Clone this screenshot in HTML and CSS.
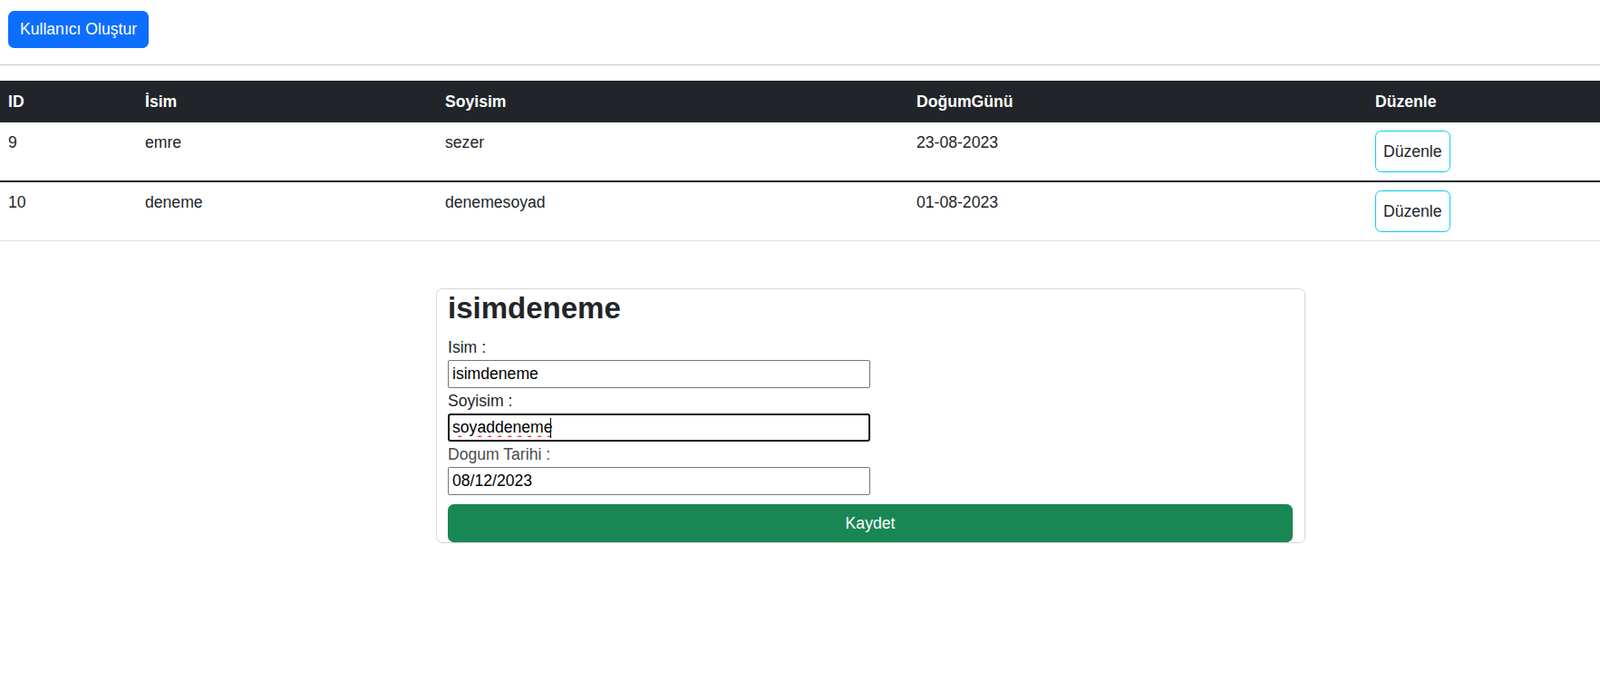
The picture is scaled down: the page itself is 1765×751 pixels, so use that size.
FILE: index.html
```html
<!DOCTYPE html>
<html lang="tr">
<head>
<meta charset="utf-8">
<title>Kullanıcılar</title>
<link rel="stylesheet" href="styles.css">
</head>
<body>
<div class="toolbar">
  <button class="btn btn-primary">Kullanıcı Oluştur</button>
</div>
<hr class="divider">
<table class="users">
  <colgroup>
    <col class="c-id"><col class="c-name"><col class="c-surname"><col class="c-birth"><col class="c-edit">
  </colgroup>
  <thead>
    <tr><th>ID</th><th>İsim</th><th>Soyisim</th><th>DoğumGünü</th><th>Düzenle</th></tr>
  </thead>
  <tbody>
    <tr class="row-first"><td>9</td><td>emre</td><td>sezer</td><td>23-08-2023</td><td><button class="btn-edit">Düzenle</button></td></tr>
    <tr class="row-last"><td>10</td><td>deneme</td><td>denemesoyad</td><td>01-08-2023</td><td><button class="btn-edit">Düzenle</button></td></tr>
  </tbody>
</table>

<div class="card">
  <h2 class="card-title">isimdeneme</h2>
  <label class="field-label" for="isim">Isim :</label>
  <input class="field" id="isim" type="text" value="isimdeneme">
  <label class="field-label" for="soyisim">Soyisim :</label>
  <div class="field-wrap">
    <input class="field field-focus" id="soyisim" type="text" value="soyaddeneme" spellcheck="false">
    <span class="caret"></span>
  </div>
  <label class="field-label label-muted" for="dogum">Dogum Tarihi :</label>
  <input class="field" id="dogum" type="text" value="08/12/2023">
  <button class="btn btn-success">Kaydet</button>
</div>
</body>
</html>
```
FILE: styles.css
```css
* { box-sizing: border-box; }
html, body { margin: 0; padding: 0; background: #fff; }
body {
  font-family: "Liberation Sans", Arial, sans-serif;
  font-size: 17.6px;
  line-height: 26.4px;
  color: #212529;
}
.toolbar { padding: 12px 0 0 9px; }
.btn {
  font-family: inherit;
  font-size: 17.6px;
  line-height: 26.4px;
  border: none;
  border-radius: 6.6px;
  color: #fff;
  cursor: pointer;
}
.btn-primary {
  background: #0d6efd;
  height: 41px;
  padding: 0 13px;
  display: block;
}
.divider {
  border: 0;
  border-top: 1px solid #c8c9ca;
  margin: 18px 0 17px;
  height: 0;
}
.users {
  width: 100%;
  border-collapse: collapse;
  table-layout: fixed;
}
.c-id { width: 151px; }
.c-name { width: 331px; }
.c-surname { width: 520px; }
.c-birth { width: 506px; }
.c-edit { width: 257px; }
.users th {
  background: #212529;
  color: #fff;
  text-align: left;
  font-weight: 700;
  padding: 10px 9px;
  line-height: 26px;
}
.users td {
  padding: 9px 9px;
  vertical-align: top;
  text-align: left;
}
.row-first td { border-bottom: 2px solid #212529; }
.row-last td { border-bottom: 1px solid #dee2e6; }
.btn-edit {
  font-family: inherit;
  font-size: 17.6px;
  line-height: 26.4px;
  background: #fff;
  color: #212529;
  border: 1px solid #0dcaf0;
  border-radius: 6.6px;
  padding: 8.8px 8px;
  height: 46px;
  display: block;
}
.card {
  margin: 52px 0 0 481px;
  width: 959px;
  border: 1px solid #d6d6d7;
  border-radius: 6.6px;
  padding: 0 13px 0 12px;
}
.card-title {
  font-size: 33px;
  font-weight: 700;
  line-height: 42px;
  margin: 0 0 8px;
  color: #212529;
}
.field-label {
  display: block;
  height: 28px;
  line-height: 28px;
  color: #212529;
}
.label-muted { color: #4a4d50; }
.field {
  display: block;
  width: 466px;
  height: 31px;
  border: 1px solid #767676;
  border-radius: 2px;
  padding: 0 4px;
  font-family: inherit;
  font-size: 17.6px;
  color: #000;
  background: #fff;
  outline: none;
}
.field-wrap { position: relative; width: 466px; }
.field-focus {
  border: 2px solid #111;
  border-radius: 3px;
  padding: 0 3px;
  text-decoration-line: underline;
  text-decoration-style: wavy;
  text-decoration-color: #ff3b3b;
  text-decoration-thickness: 1.5px;
  text-underline-offset: 3px;
  caret-color: transparent;
}
.caret {
  position: absolute;
  left: 113px;
  top: 5px;
  width: 1px;
  height: 22px;
  background: #000;
}
.btn-success {
  display: block;
  width: 100%;
  height: 42px;
  margin-top: 10px;
  background: #198754;
  text-align: center;
}
```
